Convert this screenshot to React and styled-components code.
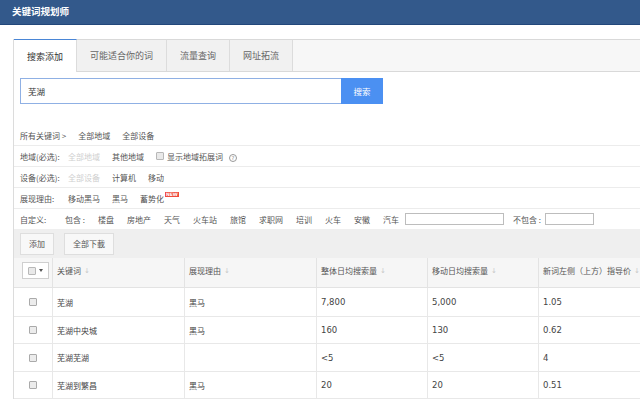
import React from "react";
import styled, { createGlobalStyle } from "styled-components";

const Global = createGlobalStyle`
  html, body { margin: 0; padding: 0; background: #fff; }
  body {
    font-family: "Noto Sans CJK SC", "Noto Sans", sans-serif;
    color: #555;
    width: 640px;
    height: 404px;
    overflow: hidden;
  }
  * { box-sizing: border-box; }
`;

const TopBar = styled.header`
  height: 25px;
  background: #33598b;
  border-bottom: 1px solid #22477a;
  display: flex;
  align-items: center;
  padding-left: 12px;
`;

const Title = styled.h1`
  margin: 0;
  font-size: 9.5px;
  font-weight: 700;
  color: #fff;
  line-height: 1;
`;

const Main = styled.main`
  padding: 14px 0 0 13px;
`;

const Panel = styled.section`
  border-left: 1px solid #dcdcdc;
`;

const TabBar = styled.nav`
  display: flex;
  height: 33px;
  background: #f7f7f7;
  border-top: 1px solid #d9d9d9;
  border-bottom: 1px solid #d9d9d9;
`;

const Tab = styled.div`
  display: flex;
  align-items: center;
  padding: 0 13px;
  font-size: 9px;
  color: ${(p) => (p.$active ? "#333" : "#666")};
  background: ${(p) => (p.$active ? "#fff" : "#f1f1f1")};
  border-right: 1px solid #dcdcdc;
  margin-top: -1px;
  margin-bottom: ${(p) => (p.$active ? "-1px" : "0")};
  border-top: 1px solid ${(p) => (p.$active ? "#4a86d6" : "#d9d9d9")};
`;

const SearchRow = styled.div`
  display: flex;
  margin: 6px 0 0 6px;
  height: 26px;
`;

const SearchInput = styled.div`
  width: 321px;
  border: 1px solid #8fb0e4;
  border-right: none;
  display: flex;
  align-items: center;
  padding-left: 7px;
  font-size: 8.5px;
  color: #333;
`;

const SearchButton = styled.button`
  width: 42px;
  border: none;
  background: #4b90f2;
  color: #fff;
  font-family: inherit;
  font-size: 8.5px;
  padding: 0;
`;

const Filters = styled.div`
  margin-top: 21px;
`;

const FilterRow = styled.div`
  display: flex;
  align-items: center;
  height: ${(p) => p.$h || 21}px;
  padding-left: 6px;
  gap: ${(p) => p.$gap || 12}px;
  border-bottom: ${(p) => (p.$last ? "none" : "1px solid #ececec")};
  font-size: 8px;
  color: #555;
  white-space: nowrap;
`;

const RowLabel = styled.span`
  width: ${(p) => p.$w || 36}px;
  flex: none;
  color: #555;
`;

const Item = styled.span`
  color: ${(p) => (p.$disabled ? "#cfcfcf" : "#555")};
  display: inline-flex;
  align-items: center;
  margin-left: ${(p) => p.$ml || 0}px;
`;

const MiniCheck = styled.span`
  width: 8px;
  height: 8px;
  border: 1px solid #b8b8b8;
  background: #e9e9e9;
  border-radius: 1px;
  display: inline-block;
  margin-right: ${(p) => (p.$bare ? 0 : 3)}px;
`;

const Help = styled.span`
  width: 8px;
  height: 8px;
  border: 1px solid #999;
  border-radius: 50%;
  font-size: 5.5px;
  line-height: 6px;
  text-align: center;
  color: #888;
  margin-left: -6px;
  margin-top: 4px;
  font-family: "DejaVu Sans", sans-serif;
`;

const NewBadge = styled.sup`
  background: #f04a3c;
  color: #fff;
  font-size: 4.5px;
  line-height: 5px;
  padding: 0 1px;
  margin-left: 1px;
  position: relative;
  top: -4px;
  font-family: "DejaVu Sans", sans-serif;
  font-weight: 700;
  vertical-align: top;
`;

const TextBox = styled.span`
  width: ${(p) => p.$w}px;
  height: 12px;
  border: 1px solid #bdbdbd;
  background: #fff;
  margin-left: ${(p) => p.$ml || 0}px;
`;

const Toolbar = styled.div`
  height: 29px;
  background: #efefef;
  display: flex;
  align-items: center;
  gap: 10px;
  padding-left: 6px;
`;

const ToolButton = styled.button`
  height: 22px;
  padding: 0 ${(p) => p.$px || 6}px;
  background: #f8f8f8;
  border: 1px solid #dedede;
  font-family: inherit;
  font-size: 8px;
  color: #555;
`;

const Grid = styled.div`
  display: grid;
  grid-template-columns: 39px 132px 132px 111px 111px 1fr;
`;

const HeadCell = styled.div`
  height: 30px;
  background: #f6f6f6;
  border-bottom: 1px solid #e3e3e3;
  border-right: 1px solid #e3e3e3;
  display: flex;
  align-items: center;
  padding: 0 0 4px 4px;
  font-size: 8px;
  color: #555;
  white-space: nowrap;
  justify-content: ${(p) => (p.$center ? "center" : "flex-start")};
`;

const SortArrow = styled.span`
  color: #c8c8c8;
  margin-left: 3px;
  font-size: 7px;
  font-family: "DejaVu Sans", sans-serif;
`;

const SelectAll = styled.span`
  width: 27px;
  height: 17px;
  border: 1px solid #cfcfcf;
  background: #fff;
  display: flex;
  align-items: center;
  justify-content: center;
  gap: 3px;
  margin-left: 1px;
`;

const Caret = styled.span`
  width: 0;
  height: 0;
  border-left: 2px solid transparent;
  border-right: 2px solid transparent;
  border-top: 3px solid #555;
`;

const Cell = styled.div`
  height: ${(p) => p.$h}px;
  border-bottom: 1px solid #e8e8e8;
  border-right: 1px solid #e8e8e8;
  display: flex;
  align-items: center;
  padding-left: 4px;
  font-size: ${(p) => (p.$num ? "8.5px" : "8px")};
  font-family: ${(p) =>
    p.$num ? '"DejaVu Sans", "Noto Sans CJK SC", sans-serif' : "inherit"};
  color: #444;
  justify-content: ${(p) => (p.$center ? "center" : "flex-start")};
`;

const RowCheck = styled.span`
  width: 8px;
  height: 8px;
  border: 1px solid #aaa;
  background: #ececec;
  border-radius: 1px;
  margin-left: -4px;
`;

const headers = ["关键词", "展现理由", "整体日均搜索量", "移动日均搜索量", "新词左侧（上方）指导价"];

const rows = [
  { kw: "芜湖", reason: "黑马", all: "7,800", mob: "5,000", price: "1.05", h: 29 },
  { kw: "芜湖中央城", reason: "黑马", all: "160", mob: "130", price: "0.62", h: 27 },
  { kw: "芜湖芜湖", reason: "", all: "<5", mob: "<5", price: "4", h: 28 },
  { kw: "芜湖到繁昌", reason: "黑马", all: "20", mob: "20", price: "0.51", h: 27 },
];

const tabs = ["搜索添加", "可能适合你的词", "流量查询", "网址拓流"];
const custom = ["楼盘", "房地产", "天气", "火车站", "旅馆", "求职网", "培训", "火车", "安徽", "汽车"];

export default function App() {
  return (
    <>
      <Global />
      <TopBar>
        <Title>关键词规划师</Title>
      </TopBar>
      <Main>
        <Panel>
          <TabBar>
            {tabs.map((t, i) => (
              <Tab key={t} $active={i === 0}>
                {t}
              </Tab>
            ))}
          </TabBar>
          <SearchRow>
            <SearchInput>芜湖</SearchInput>
            <SearchButton>搜索</SearchButton>
          </SearchRow>
          <Filters>
            <FilterRow>
              <Item>所有关键词 &gt;</Item>
              <Item>全部地域</Item>
              <Item>全部设备</Item>
            </FilterRow>
            <FilterRow>
              <RowLabel $w={36}>地域(必选):</RowLabel>
              <Item $disabled>全部地域</Item>
              <Item>其他地域</Item>
              <Item>
                <MiniCheck />
                显示地域拓展词
              </Item>
              <Help>?</Help>
            </FilterRow>
            <FilterRow>
              <RowLabel $w={36}>设备(必选):</RowLabel>
              <Item $disabled>全部设备</Item>
              <Item>计算机</Item>
              <Item>移动</Item>
            </FilterRow>
            <FilterRow>
              <RowLabel $w={36}>展现理由:</RowLabel>
              <Item>移动黑马</Item>
              <Item>黑马</Item>
              <Item>
                蓄势化
                <NewBadge>NEW</NewBadge>
              </Item>
            </FilterRow>
            <FilterRow $last $h={20} $gap={13}>
              <RowLabel $w={32}>自定义:</RowLabel>
              <Item>包含 :</Item>
              {custom.map((c) => (
                <Item key={c}>{c}</Item>
              ))}
              <TextBox $w={99} $ml={-7} />
              <Item $ml={-4}>不包含 :</Item>
              <TextBox $w={49} $ml={-9} />
            </FilterRow>
          </Filters>
          <Toolbar>
            <ToolButton $px={8}>添加</ToolButton>
            <ToolButton $px={8}>全部下載</ToolButton>
          </Toolbar>
          <Grid>
            <HeadCell $center>
              <SelectAll>
                <MiniCheck $bare />
                <Caret />
              </SelectAll>
            </HeadCell>
            {headers.map((h) => (
              <HeadCell key={h}>
                {h}
                <SortArrow>↓</SortArrow>
              </HeadCell>
            ))}
            {rows.map((r) => (
              <React.Fragment key={r.kw}>
                <Cell $h={r.h} $center>
                  <RowCheck />
                </Cell>
                <Cell $h={r.h}>{r.kw}</Cell>
                <Cell $h={r.h}>{r.reason}</Cell>
                <Cell $h={r.h} $num>
                  {r.all}
                </Cell>
                <Cell $h={r.h} $num>
                  {r.mob}
                </Cell>
                <Cell $h={r.h} $num>
                  {r.price}
                </Cell>
              </React.Fragment>
            ))}
          </Grid>
        </Panel>
      </Main>
    </>
  );
}
